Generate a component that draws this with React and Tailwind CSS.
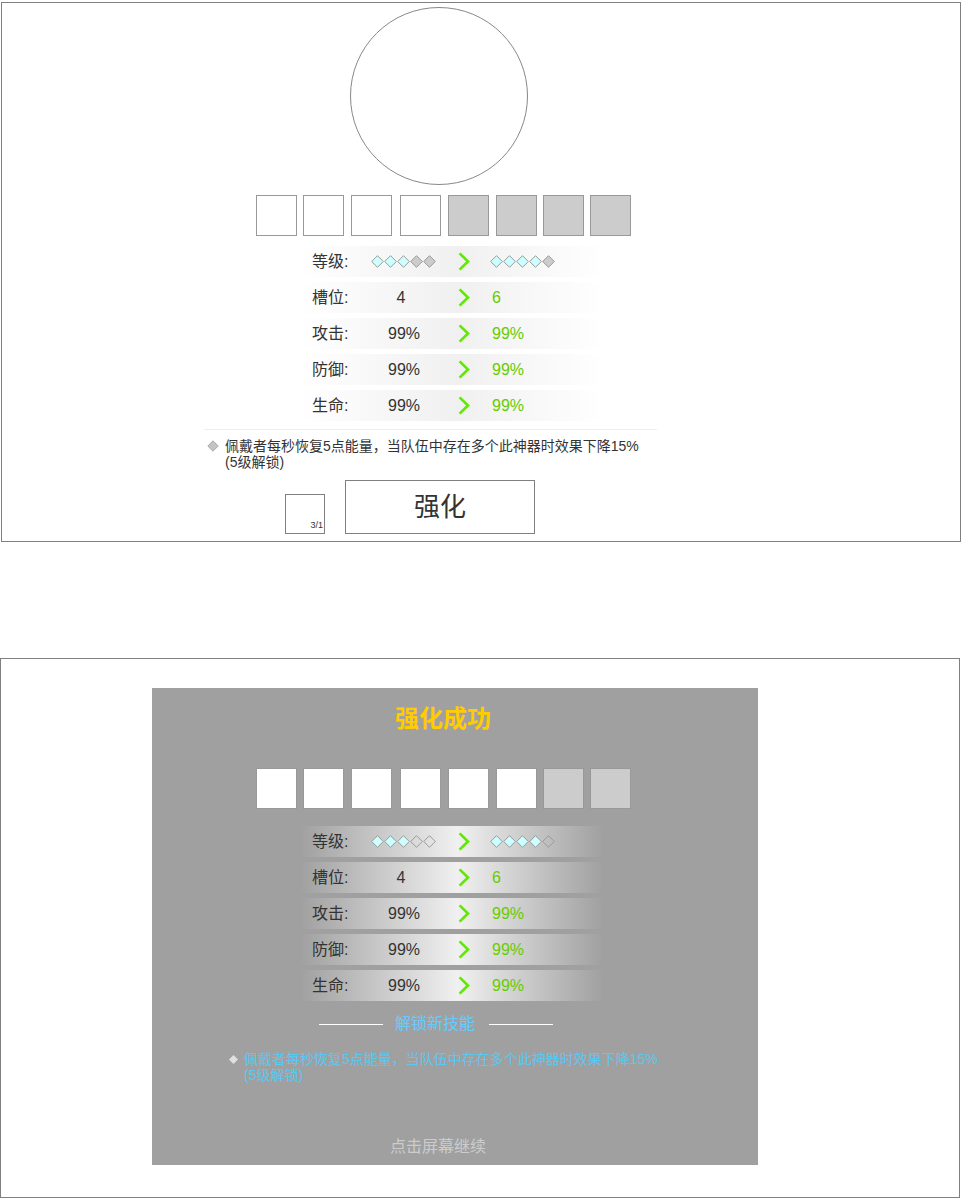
import React from "react";

function Diamonds({ n, emptyFill }) {
  return (
    <svg width="66" height="13" viewBox="0 0 66 13" className="block">
      {[0, 1, 2, 3, 4].map((i) => {
        const cx = 6.5 + 13 * i;
        return (
          <polygon
            key={i}
            points={`${cx},0.7 ${cx + 5.8},6.5 ${cx},12.3 ${cx - 5.8},6.5`}
            fill={i < n ? "#ccffff" : emptyFill}
            stroke="#999999"
            strokeWidth="1"
          />
        );
      })}
    </svg>
  );
}

function Chevron() {
  return (
    <svg width="12" height="19" viewBox="0 0 12 19" className="block">
      <path d="M1.6 1.4 L10 9.5 L1.6 17.6" fill="none" stroke="#5fe800" strokeWidth="2.6" />
    </svg>
  );
}

function StatRows({ emptyFill }) {
  const rows = [
    { label: "等级:", left: <Diamonds n={3} emptyFill={emptyFill} />, right: <Diamonds n={4} emptyFill={emptyFill} />, dia: true },
    { label: "槽位:", left: <span className="mr-[6px]">4</span>, right: "6" },
    { label: "攻击:", left: "99%", right: "99%" },
    { label: "防御:", left: "99%", right: "99%" },
    { label: "生命:", left: "99%", right: "99%" },
  ];
  return (
    <div className="flex flex-col gap-[5px]">
      {rows.map((r) => (
        <div
          key={r.label}
          className="flex h-[31px] w-[303px] items-center bg-[linear-gradient(to_right,rgba(240,240,240,0),#f0f0f0_52%,rgba(240,240,240,0))]"
        >
          <div className="w-[60px] whitespace-nowrap pl-[12px] text-[16px] leading-none text-[#333]">{r.label}</div>
          <div className="flex w-[88px] justify-center text-[16px] leading-none text-[#333]">{r.left}</div>
          <div className="w-[42px] pl-[10px]">
            <Chevron />
          </div>
          <div className={`${r.dia ? "" : "pl-[2px]"} text-[16px] leading-none text-[#66cc00]`}>{r.right}</div>
        </div>
      ))}
    </div>
  );
}

const squareGaps = ["ml-0", "ml-[6px]", "ml-[7px]", "ml-[8px]", "ml-[7px]", "ml-[7px]", "ml-[6px]", "ml-[6px]"];

function Squares({ white }) {
  return (
    <div className="flex">
      {[0, 1, 2, 3, 4, 5, 6, 7].map((i) => (
        <div
          key={i}
          className={`${squareGaps[i]} h-[41px] w-[41px] border border-[#999] ${i < white ? "bg-white" : "bg-[#cccccc]"}`}
        />
      ))}
    </div>
  );
}

export default function App() {
  return (
    <div className="min-h-[1198px] w-[961px] bg-white pt-[2px] font-['Liberation_Sans','Noto_Sans_CJK_SC',sans-serif]">
      {/* Top panel */}
      <div className="ml-[1px] flex h-[540px] w-[960px] flex-col border border-[#808080]">
        <div className="ml-[348px] mt-[4px] h-[178px] w-[178px] rounded-full border border-[#888]" />
        <div className="ml-[254px] mt-[10px]">
          <Squares white={4} />
        </div>
        <div className="ml-[298px] mt-[10px]">
          <StatRows emptyFill="#cccccc" />
        </div>
        <div className="ml-[202px] mt-[8px] h-px w-[453px] bg-[#eeeeee]" />
        <div className="ml-[205px] mt-[8px] flex items-start gap-[6px]">
          <svg width="12" height="12" viewBox="0 0 12 12" className="mt-[2px] block shrink-0">
            <polygon points="6,0.8 11.2,6 6,11.2 0.8,6" fill="#c4c4c4" stroke="#a8a8a8" strokeWidth="1" />
          </svg>
          <div className="whitespace-nowrap text-[14px] leading-[16px] text-[#333]">
            佩戴者每秒恢复5点能量，当队伍中存在多个此神器时效果下降15%
            <br />
            (5级解锁)
          </div>
        </div>
        <div className="ml-[283px] mt-[10px] flex items-end gap-[20px]">
          <div className="flex h-[40px] w-[40px] items-end justify-end border border-[#808080] pb-[3px] pr-[1px]">
            <span className="text-[9px] leading-none text-[#333]">3/1</span>
          </div>
          <div className="flex h-[54px] w-[190px] items-center justify-center border border-[#808080] text-[26px] leading-none text-[#333]">
            强化
          </div>
        </div>
      </div>

      {/* Bottom panel */}
      <div className="mt-[116px] flex h-[540px] w-[960px] flex-col border border-[#808080]">
        <div className="ml-[151px] mt-[29px] flex h-[477px] w-[606px] flex-col bg-[#a0a0a0]">
          <div className="ml-[243px] mt-[15px] whitespace-nowrap text-[24px] font-bold leading-[32px] text-[#ffcc00]">
            强化成功
          </div>
          <div className="ml-[104px] mt-[33px]">
            <Squares white={6} />
          </div>
          <div className="ml-[148px] mt-[17px]">
            <StatRows emptyFill="none" />
          </div>
          <div className="ml-[167px] mt-[13px] flex h-[20px] items-center">
            <div className="h-px w-[64px] bg-white" />
            <div className="ml-[12px] whitespace-nowrap text-[16px] leading-[20px] text-[#66ccff]">解锁新技能</div>
            <div className="ml-[14px] h-px w-[64px] bg-white" />
          </div>
          <div className="ml-[77px] mt-[17px] flex items-start gap-[6px]">
            <svg width="9" height="9" viewBox="0 0 9 9" className="mt-[4px] block shrink-0">
              <polygon points="4.5,0 9,4.5 4.5,9 0,4.5" fill="#e0e0e0" />
            </svg>
            <div className="whitespace-nowrap text-[14px] leading-[16px] text-[#5ac8f0]">
              佩戴者每秒恢复5点能量，当队伍中存在多个此神器时效果下降15%
              <br />
              (5级解锁)
            </div>
          </div>
          <div className="ml-[238px] mt-[54px] whitespace-nowrap text-[16px] leading-[20px] text-[#cccccc]">
            点击屏幕继续
          </div>
        </div>
      </div>
    </div>
  );
}
